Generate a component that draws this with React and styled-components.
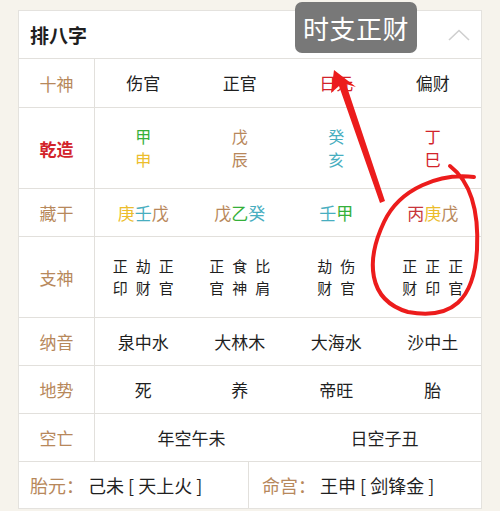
import React from "react";
import styled, { createGlobalStyle } from "styled-components";

const Global = createGlobalStyle`
  html, body { margin: 0; padding: 0; background: #f6f3ec; }
  body { font-family: "Noto Sans CJK SC", "Noto Sans", sans-serif; }
`;

const Page = styled.div`
  position: relative;
  width: 500px;
  height: 511px;
  padding: 10px 18px 0 18px;
  box-sizing: border-box;
  overflow: hidden;
`;

const Card = styled.div`
  width: 464px;
  background: #fff;
  border: 1px solid #e4e2de;
  box-sizing: border-box;
`;

const Header = styled.div`
  height: 47px;
  display: flex;
  align-items: center;
  justify-content: space-between;
  padding: 0 11px 0 11px;
`;

const Title = styled.div`
  font-size: 19px;
  font-weight: 700;
  color: #1f1f1f;
`;

const Row = styled.div`
  display: grid;
  grid-template-columns: 76px 1fr;
  height: ${(p) => p.$h}px;
  border-top: 1px solid #e2e0dc;
`;

const Label = styled.div`
  display: flex;
  align-items: center;
  justify-content: center;
  border-right: 1px solid #e2e0dc;
  font-size: 17px;
  color: ${(p) => (p.$strong ? "#d2232a" : "#b7885b")};
  font-weight: ${(p) => (p.$strong ? 700 : 400)};
`;

const Cells = styled.div`
  display: grid;
  grid-template-columns: repeat(${(p) => p.$n || 4}, 1fr);
`;

const Cell = styled.div`
  display: flex;
  flex-direction: column;
  align-items: center;
  justify-content: center;
  font-size: ${(p) => p.$fs || 17}px;
  line-height: ${(p) => p.$lh || 22}px;
  color: #1f1f1f;
`;

const C = styled.span`
  color: ${(p) => p.$c};
`;

const Spaced = styled.div`
  letter-spacing: 8px;
  padding-left: 8px;
  line-height: 22px;
  font-size: 15px;
  text-align: center;
`;

const Bottom = styled.div`
  display: grid;
  grid-template-columns: 230px 1fr;
  height: 46px;
  border-top: 1px solid #e2e0dc;
`;

const BottomCell = styled.div`
  display: flex;
  align-items: center;
  padding-left: ${(p) => p.$pl}px;
  border-right: ${(p) => (p.$div ? "1px solid #e2e0dc" : "none")};
  font-size: 18px;
  color: #1f1f1f;
  white-space: pre;
`;

const BLabel = styled.span`
  color: #b7885b;
  margin-right: 4px;
`;

const Tooltip = styled.div`
  position: absolute;
  left: 295px;
  top: 2px;
  width: 122px;
  height: 51px;
  border-radius: 7px;
  background: #787878;
  color: #fff;
  font-size: 26px;
  display: flex;
  align-items: center;
  justify-content: center;
  letter-spacing: 0.5px;
`;

const Overlay = styled.svg`
  position: absolute;
  left: 0;
  top: 0;
  pointer-events: none;
`;

const YELLOW = "#ecbd2c";
const GREEN = "#35b03a";
const TEAL = "#48aec0";
const TAN = "#b8875a";
const RED = "#d2232a";

const shishen = ["伤官", "正官", "日元", "偏财"];
const pillars = [
  [["甲", GREEN], ["申", YELLOW]],
  [["戊", TAN], ["辰", TAN]],
  [["癸", TEAL], ["亥", TEAL]],
  [["丁", RED], ["巳", RED]],
];
const canggan = [
  [["庚", YELLOW], ["壬", TEAL], ["戊", TAN]],
  [["戊", TAN], ["乙", GREEN], ["癸", TEAL]],
  [["壬", TEAL], ["甲", GREEN]],
  [["丙", "#c8363c"], ["庚", YELLOW], ["戊", TAN]],
];
const zhishen = [
  ["正劫正", "印财官"],
  ["正食比", "官神肩"],
  ["劫伤", "财官"],
  ["正正正", "财印官"],
];
const nayin = ["泉中水", "大林木", "大海水", "沙中土"];
const dishi = ["死", "养", "帝旺", "胎"];

export default function App() {
  return (
    <>
      <Global />
      <Page>
        <Card>
          <Header>
            <Title>排八字</Title>
            <svg width="22" height="12" viewBox="0 0 22 12">
              <path d="M1 11 L11 1.5 L21 11" fill="none" stroke="#cfcfcf" strokeWidth="1.6" />
            </svg>
          </Header>
          <Row $h={48}>
            <Label>十神</Label>
            <Cells>
              {shishen.map((t, i) => (
                <Cell key={i}>{i === 2 ? <C $c={RED}>{t}</C> : t}</Cell>
              ))}
            </Cells>
          </Row>
          <Row $h={80}>
            <Label $strong>乾造</Label>
            <Cells>
              {pillars.map((p, i) => (
                <Cell key={i} $lh={23} $fs={16}>
                  {p.map(([ch, c], j) => (
                    <C key={j} $c={c}>{ch}</C>
                  ))}
                </Cell>
              ))}
            </Cells>
          </Row>
          <Row $h={47}>
            <Label>藏干</Label>
            <Cells>
              {canggan.map((g, i) => (
                <Cell key={i}>
                  <span>
                    {g.map(([ch, c], j) => (
                      <C key={j} $c={c}>{ch}</C>
                    ))}
                  </span>
                </Cell>
              ))}
            </Cells>
          </Row>
          <Row $h={80}>
            <Label>支神</Label>
            <Cells>
              {zhishen.map((z, i) => (
                <Cell key={i}>
                  <Spaced>
                    {z[0]}
                    <br />
                    {z[1]}
                  </Spaced>
                </Cell>
              ))}
            </Cells>
          </Row>
          <Row $h={47}>
            <Label>纳音</Label>
            <Cells>
              {nayin.map((t, i) => (
                <Cell key={i}>{t}</Cell>
              ))}
            </Cells>
          </Row>
          <Row $h={47}>
            <Label>地势</Label>
            <Cells>
              {dishi.map((t, i) => (
                <Cell key={i}>{t}</Cell>
              ))}
            </Cells>
          </Row>
          <Row $h={47}>
            <Label>空亡</Label>
            <Cells $n={2}>
              <Cell>年空午未</Cell>
              <Cell>日空子丑</Cell>
            </Cells>
          </Row>
          <Bottom>
            <BottomCell $pl={11} $div>
              <BLabel>胎元：</BLabel>{"己未 [ 天上火 ]"}
            </BottomCell>
            <BottomCell $pl={13}>
              <BLabel>命宫：</BLabel>{"王申 [ 剑锋金 ]"}
            </BottomCell>
          </Bottom>
        </Card>
        <Tooltip>时支正财</Tooltip>
        <Overlay width="500" height="511" viewBox="0 0 500 511">
          <path
            d="M334 70 L331 93 L339 86 L380 203 L385 201 L346 84 L356 87 Z"
            fill="#ec1c1c"
          />
          <path
            d="M474 177 C 440 173, 400 188, 384 222 C 366 260, 367 300, 408 312 C 452 320, 474 300, 477 250 C 479 212, 472 183, 450 166"
            fill="none"
            stroke="#ec1c1c"
            strokeWidth="4"
            strokeLinecap="round"
          />
        </Overlay>
      </Page>
    </>
  );
}
